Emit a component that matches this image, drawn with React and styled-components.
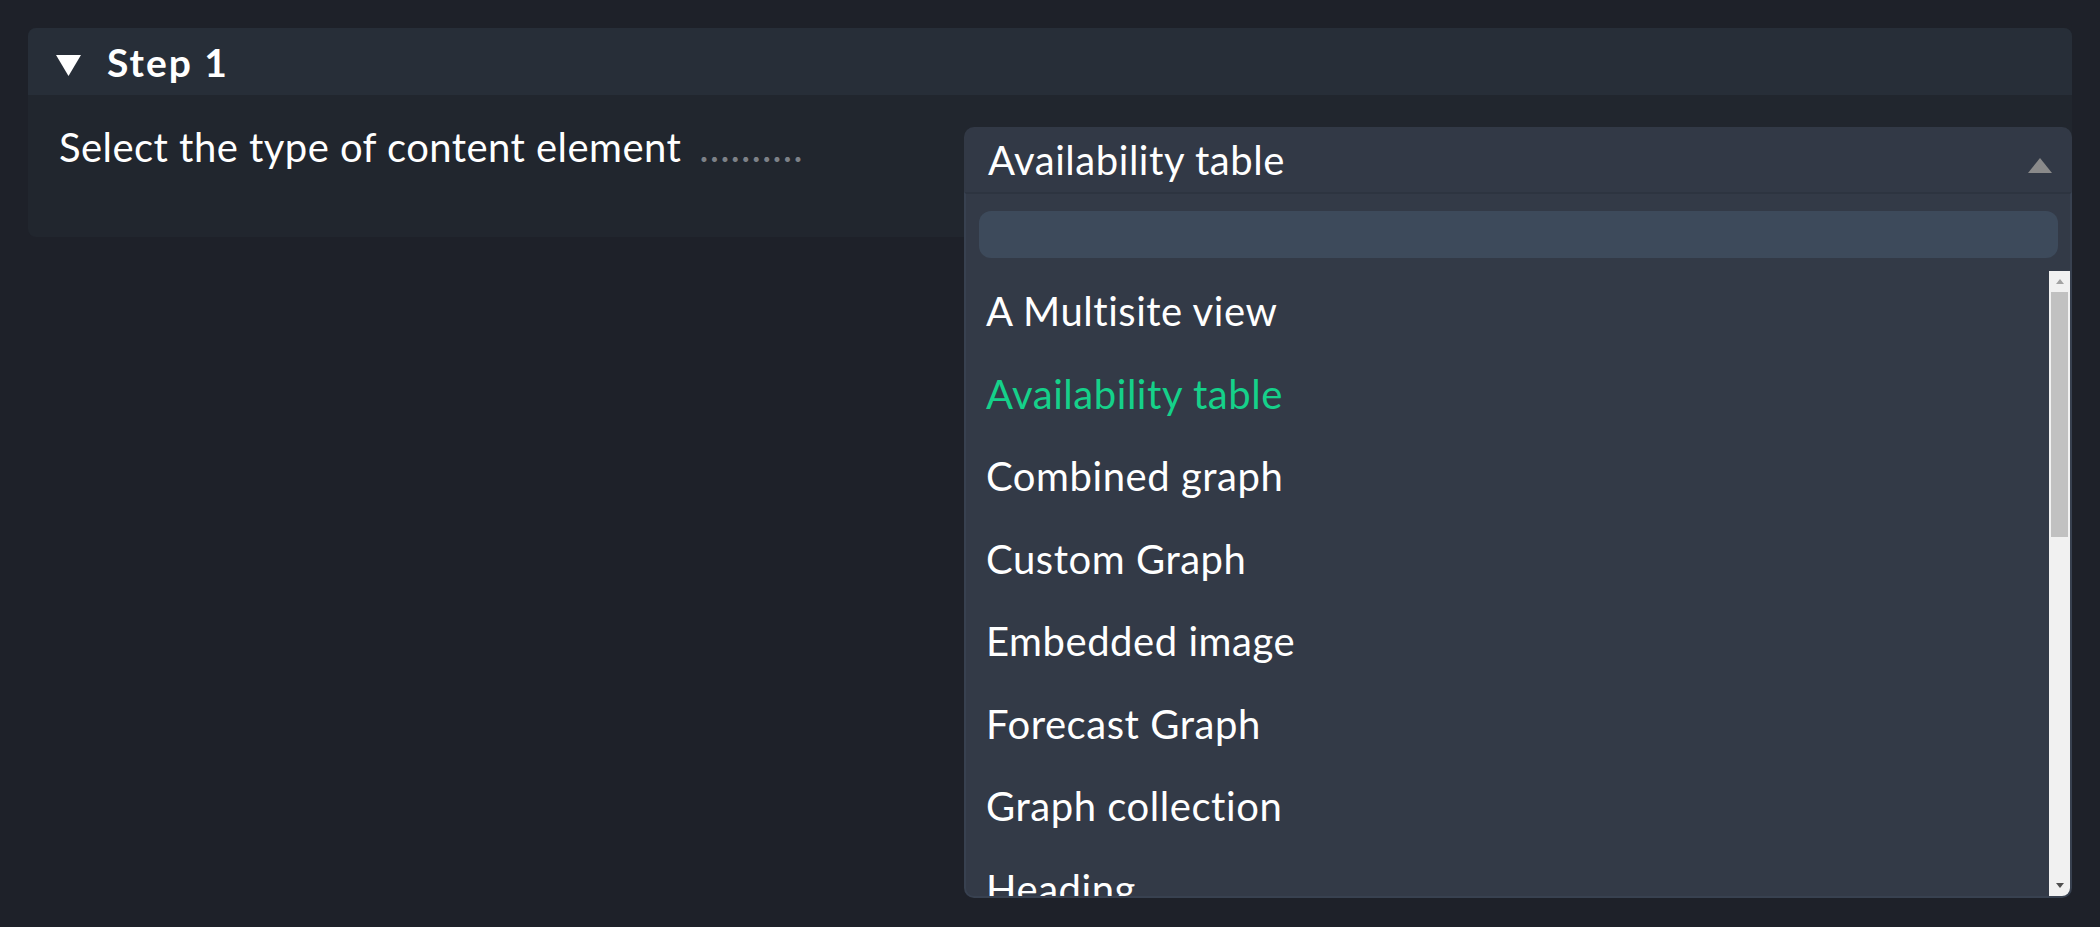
import React from 'react';
import styled, { createGlobalStyle } from 'styled-components';

const GlobalStyle = createGlobalStyle`
  html, body {
    margin: 0;
    padding: 0;
    background: #1e2129;
    font-family: Lato, "Noto Sans", "Liberation Sans", sans-serif;
    color: #ffffff;
  }
`;

const Page = styled.div`
  min-height: 927px;
  box-sizing: border-box;
  padding: 28px 28px 0 28px;
`;

const Panel = styled.div`
  background: #21262e;
  border-radius: 8px;
`;

const PanelHeader = styled.div`
  display: flex;
  align-items: center;
  gap: 26px;
  height: 67px;
  padding-left: 28px;
  background: #272e38;
  border-radius: 8px 8px 0 0;
`;

const Caret = styled.svg`
  width: 25px;
  height: 21px;
  margin-top: 8px;
  fill: #ffffff;
`;

const Title = styled.span`
  font-size: 39px;
  font-weight: 700;
  letter-spacing: 2px;
`;

const PanelBody = styled.div`
  display: flex;
  align-items: flex-start;
  height: 142px;
  box-sizing: border-box;
  padding: 32px 0 0 31px;
`;

const Label = styled.div`
  flex: 0 0 905px;
  font-size: 40px;
  line-height: 41px;
  letter-spacing: 0.45px;
  white-space: nowrap;
`;

const Dots = styled.span`
  margin-left: 18px;
  color: #7d8188;
  letter-spacing: 1px;
`;

const SelectWrap = styled.div`
  position: relative;
  flex: 1;
`;

const SelectBox = styled.div`
  display: flex;
  align-items: center;
  justify-content: space-between;
  height: 65px;
  padding: 0 20px 0 24px;
  background: #323946;
  border-radius: 10px 10px 0 0;
`;

const SelectValue = styled.span`
  font-size: 40px;
  line-height: 48px;
  letter-spacing: 0.55px;
`;

const SelectArrow = styled.span`
  width: 0;
  height: 0;
  margin-top: 12px;
  border-left: 12.5px solid transparent;
  border-right: 12.5px solid transparent;
  border-bottom: 15px solid #8a8a8a;
`;

const Dropdown = styled.div`
  position: absolute;
  top: 100%;
  left: 0;
  right: 0;
  background: #333a47;
  border: 2px solid #384150;
  border-top-color: #2d3440;
  border-radius: 0 0 10px 10px;
  overflow: hidden;
`;

const SearchRow = styled.div`
  padding: 17px 12px 13px 13px;
`;

const SearchInput = styled.div`
  height: 47px;
  background: #3d4a5b;
  border-radius: 12px;
`;

const ListWrap = styled.div`
  display: flex;
  height: 625px;
`;

const Options = styled.ul`
  flex: 1;
  margin: 0;
  padding: 0;
  list-style: none;
  overflow: hidden;
`;

const Option = styled.li`
  height: 82.5px;
  box-sizing: border-box;
  padding: 16px 20px 0 20px;
  font-size: 40px;
  line-height: 48px;
  letter-spacing: 0.55px;
  white-space: nowrap;
  color: ${props => (props.$selected ? '#15d18a' : '#ffffff')};
`;

const ScrollBar = styled.div`
  display: flex;
  flex-direction: column;
  width: 21px;
  background: #f1f1f1;
`;

const ScrollButton = styled.div`
  display: flex;
  align-items: center;
  justify-content: center;
  height: 21px;
  flex: none;
`;

const ScrollArrow = styled.span`
  width: 0;
  height: 0;
  border-left: 4.5px solid transparent;
  border-right: 4.5px solid transparent;
  ${props => props.$down
    ? `border-top: 5px solid ${props.$color};`
    : `border-bottom: 5px solid ${props.$color};`}
`;

const ScrollTrack = styled.div`
  flex: 1;
  padding: 0 2px;
`;

const ScrollThumb = styled.div`
  height: 245px;
  background: #c1c1c1;
`;

const options = [
  'A Multisite view',
  'Availability table',
  'Combined graph',
  'Custom Graph',
  'Embedded image',
  'Forecast Graph',
  'Graph collection',
  'Heading',
];

const selected = 'Availability table';

export default function App() {
  return (
    <>
      <GlobalStyle />
      <Page>
        <Panel>
          <PanelHeader>
            <Caret viewBox="0 0 25 21">
              <polygon points="0,0 25,0 12.5,21" />
            </Caret>
            <Title>Step 1</Title>
          </PanelHeader>
          <PanelBody>
            <Label>
              Select the type of content element
              <Dots>..........</Dots>
            </Label>
            <SelectWrap>
              <SelectBox>
                <SelectValue>{selected}</SelectValue>
                <SelectArrow />
              </SelectBox>
              <Dropdown>
                <SearchRow>
                  <SearchInput />
                </SearchRow>
                <ListWrap>
                  <Options>
                    {options.map(o => (
                      <Option key={o} $selected={o === selected}>{o}</Option>
                    ))}
                  </Options>
                  <ScrollBar>
                    <ScrollButton>
                      <ScrollArrow $color="#a3a3a3" />
                    </ScrollButton>
                    <ScrollTrack>
                      <ScrollThumb />
                    </ScrollTrack>
                    <ScrollButton>
                      <ScrollArrow $down $color="#505050" />
                    </ScrollButton>
                  </ScrollBar>
                </ListWrap>
              </Dropdown>
            </SelectWrap>
          </PanelBody>
        </Panel>
      </Page>
    </>
  );
}
